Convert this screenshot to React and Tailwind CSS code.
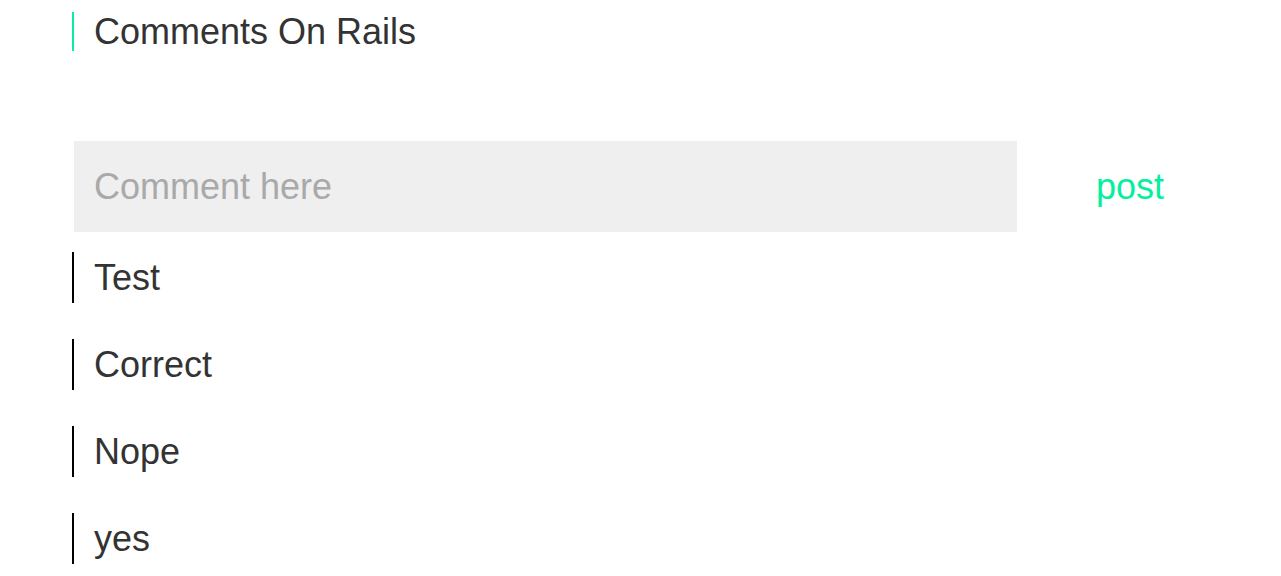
export default function App() {
  const comments = ["Test", "Correct", "Nope", "yes"];

  return (
    <div className="min-h-screen bg-white font-['Liberation_Sans',Arial,sans-serif] text-[#333333]">
      <div className="pl-[72px] pt-[12px]">
        <h1 className="border-l-2 border-[#05ef9e] pl-5 text-[36px] font-normal leading-[39px]">
          Comments On Rails
        </h1>

        <form className="mt-[90px] flex items-center pl-[2px]" onSubmit={(e) => e.preventDefault()}>
          <input
            type="text"
            placeholder="Comment here"
            className="h-[91px] w-[943px] bg-[#efefef] px-5 text-[36px] text-[#333333] outline-none placeholder:text-[#a9a9a9]"
          />
          <button type="submit" className="ml-[79px] text-[36px] leading-none text-[#05ef9e]">
            post
          </button>
        </form>

        <ul className="mt-5 flex flex-col gap-[36px]">
          {comments.map((c) => (
            <li key={c} className="border-l-2 border-black pl-5 text-[36px] leading-[51px]">
              {c}
            </li>
          ))}
        </ul>
      </div>
    </div>
  );
}
